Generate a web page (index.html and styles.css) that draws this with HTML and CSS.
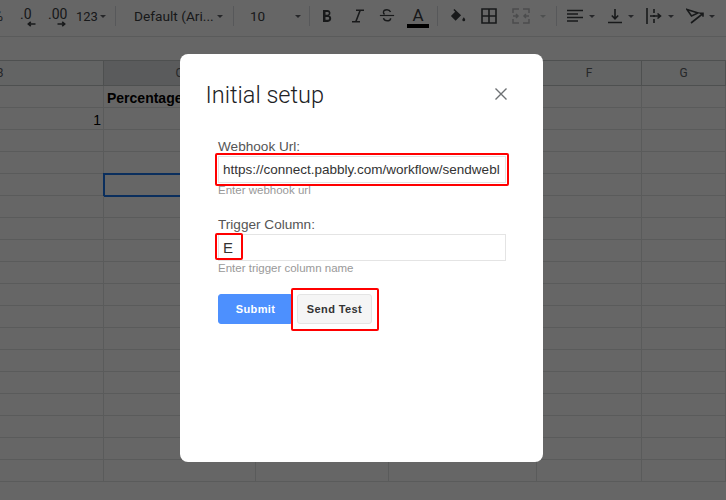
FILE: index.html
```html
<!DOCTYPE html>
<html lang="en">
<head>
<meta charset="utf-8">
<title>Initial setup</title>
<link rel="stylesheet" href="styles.css">
</head>
<body>
<div class="app">
  <div class="toolbar">
    <span class="tb-text pct">%</span>
    <span class="tb-dec dec0"><span>.0</span>
      <svg width="9" height="6" viewBox="0 0 9 6"><path d="M8.500 3H1.500M3.800 .8 1.300 3l2.500 2.200" class="st thick"/></svg></span>
    <span class="tb-dec dec00"><span>.00</span>
      <svg width="9" height="6" viewBox="0 0 9 6"><path d="M.5 3h7M5.200 .8 7.700 3 5.200 5.200" class="st thick"/></svg></span>
    <span class="tb-text num">123</span><i class="caret c-num"></i>
    <i class="sep s1"></i>
    <span class="tb-text font">Default (Ari...</span><i class="caret c-font"></i>
    <i class="sep s2"></i>
    <span class="tb-text size">10</span><i class="caret c-size"></i>
    <i class="sep s3"></i>
    <svg class="ic bold" width="12" height="14" viewBox="0 0 12 14"><path d="M2 1h4.500a3 3 0 0 1 1.500 5.600A3.300 3.300 0 0 1 7 13H2zM4.500 3v2.700h2a1.350 1.350 0 0 0 0-2.700zM4.500 8v2.800h2.300a1.400 1.400 0 0 0 0-2.800z" class="fl" fill-rule="evenodd"/></svg>
    <svg class="ic ital" width="14" height="14" viewBox="0 0 14 14"><path d="M5 1.200h8M1 12.800h8M9.200 1.200 4.800 12.800" class="st thick"/></svg>
    <svg class="ic strike" width="16" height="15" viewBox="0 0 18 16"><path d="M1 8h16" class="st"/><path d="M13 4c-.7-1.700-2-2.500-4-2.500-2.400 0-4 1.200-4 3 0 1 .5 1.700 1.300 2.300M5 11c.6 2 2 3 4.200 3 2.400 0 3.900-1.200 3.900-3" class="st thick"/></svg>
    <span class="color-a"><span class="a-letter">A</span><i class="a-bar"></i></span>
    <i class="sep s4"></i>
    <svg class="ic fill" width="16" height="15" viewBox="0 0 18 16"><path d="M5 .6 3.800 1.800l2 2L1 8.500l5.300 5.300 6.200-6.200z" class="fl"/><path d="M15.500 10c-1 1.300-1.600 2.200-1.600 3a1.600 1.600 0 0 0 3.200 0c0-.8-.6-1.700-1.600-3z" class="fl"/></svg>
    <svg class="ic borders" width="16" height="16" viewBox="0 0 16 16"><path d="M1 1h14v14H1zM8 1v14M1 8h14" class="st thick"/></svg>
    <svg class="ic merge" width="18" height="16" viewBox="0 0 18 16"><path d="M1 5V1h6M11 1h6v4M1 11v4h6M11 15h6v-4M1 8h5M17 8h-5M4 6l2 2-2 2M14 6l-2 2 2 2" class="st dim"/></svg>
    <i class="caret caret-dim c-merge"></i>
    <i class="sep s5"></i>
    <svg class="ic align" width="16" height="14" viewBox="0 0 16 14"><path d="M0 1.500h16M0 5h11M0 8.500h16M0 12h11" class="st thick"/></svg><i class="caret c-align"></i>
    <svg class="ic valign" width="14" height="16" viewBox="0 0 14 16"><path d="M0 14.500h14M7 1v9.500M3.800 7.500 7 10.800l3.200-3.300" class="st thick"/></svg><i class="caret c-valign"></i>
    <svg class="ic wrap" width="16" height="16" viewBox="0 0 16 16"><path d="M1 0v16M8 1v4M8 7v2M8 11v4M4 8h10M11.500 5.500 14.500 8l-3 2.500" class="st thick"/></svg><i class="caret c-wrap"></i>
    <svg class="ic rotate" width="18" height="16" viewBox="0 0 18 16"><path d="M1 1.500 12 5 5.500 8zM5 15l12-9.500M13.500 5.200H17v3.500" class="st thick"/></svg><i class="caret c-rotate"></i>
  </div>
  <div class="formula"></div>
  <div class="sheet">
    <div class="head">B</div><div class="head active">C</div><div class="head">D</div><div class="head">E</div><div class="head">F</div><div class="head">G</div>
    <div class="cell"></div><div class="cell bold-cell">Percentage</div><div class="cell"></div><div class="cell"></div><div class="cell"></div><div class="cell"></div>
    <div class="cell num-cell">1</div><div class="cell"></div><div class="cell"></div><div class="cell"></div><div class="cell"></div><div class="cell"></div>
    <div class="cell"></div><div class="cell"></div><div class="cell"></div><div class="cell"></div><div class="cell"></div><div class="cell"></div>
    <div class="cell"></div><div class="cell"></div><div class="cell"></div><div class="cell"></div><div class="cell"></div><div class="cell"></div>
    <div class="cell"></div><div class="cell selected"></div><div class="cell"></div><div class="cell"></div><div class="cell"></div><div class="cell"></div>
    <div class="cell"></div><div class="cell"></div><div class="cell"></div><div class="cell"></div><div class="cell"></div><div class="cell"></div>
    <div class="cell"></div><div class="cell"></div><div class="cell"></div><div class="cell"></div><div class="cell"></div><div class="cell"></div>
    <div class="cell"></div><div class="cell"></div><div class="cell"></div><div class="cell"></div><div class="cell"></div><div class="cell"></div>
    <div class="cell"></div><div class="cell"></div><div class="cell"></div><div class="cell"></div><div class="cell"></div><div class="cell"></div>
    <div class="cell"></div><div class="cell"></div><div class="cell"></div><div class="cell"></div><div class="cell"></div><div class="cell"></div>
    <div class="cell"></div><div class="cell"></div><div class="cell"></div><div class="cell"></div><div class="cell"></div><div class="cell"></div>
    <div class="cell"></div><div class="cell"></div><div class="cell"></div><div class="cell"></div><div class="cell"></div><div class="cell"></div>
    <div class="cell"></div><div class="cell"></div><div class="cell"></div><div class="cell"></div><div class="cell"></div><div class="cell"></div>
    <div class="cell"></div><div class="cell"></div><div class="cell"></div><div class="cell"></div><div class="cell"></div><div class="cell"></div>
    <div class="cell"></div><div class="cell"></div><div class="cell"></div><div class="cell"></div><div class="cell"></div><div class="cell"></div>
    <div class="cell"></div><div class="cell"></div><div class="cell"></div><div class="cell"></div><div class="cell"></div><div class="cell"></div>
    <div class="cell"></div><div class="cell"></div><div class="cell"></div><div class="cell"></div><div class="cell"></div><div class="cell"></div>
    <div class="cell"></div><div class="cell"></div><div class="cell"></div><div class="cell"></div><div class="cell"></div><div class="cell"></div>
  </div>
</div>

<div class="scrim"></div>

<section class="dialog">
  <header class="dialog-head">
    <h1 class="dialog-title">Initial setup</h1>
    <svg class="close" width="12" height="12" viewBox="0 0 12 12"><path d="M.5.5l11 11M11.500.5l-11 11"/></svg>
  </header>
  <form class="form">
    <div class="field">
      <label class="label">Webhook Url:</label>
      <div class="input">https://connect.pabbly.com/workflow/sendwebl</div>
      <span class="mark mark-url"></span>
      <small class="hint">Enter webhook url</small>
    </div>
    <div class="field">
      <label class="label">Trigger Column:</label>
      <div class="input input-large">E</div>
      <span class="mark mark-col"></span>
      <small class="hint">Enter trigger column name</small>
    </div>
    <div class="actions">
      <button type="button" class="btn btn-primary">Submit</button>
      <span class="test-wrap">
        <button type="button" class="btn btn-default">Send Test</button>
        <span class="mark mark-test"></span>
      </span>
    </div>
  </form>
</section>
</body>
</html>
```

FILE: styles.css
```css
* { box-sizing: border-box; }
html, body { margin: 0; padding: 0; height: 100%; overflow: hidden; }
body { width: 726px; height: 500px; position: relative; background: #fff; font-family: "Liberation Sans", Arial, sans-serif; }

.app { width: 726px; height: 500px; display: flex; flex-direction: column; overflow: hidden; }

/* toolbar */
.toolbar { flex: none; height: 37px; display: flex; align-items: center; border-bottom: 1px solid #e2e3e3; padding-bottom: 4px; color: #3c4043; white-space: nowrap; overflow: hidden; }
.toolbar > * { flex: none; }
.tb-text { font: 14px Roboto, sans-serif; color: #3c4043; }
.pct { width: 3px; overflow: hidden; direction: rtl; }
.tb-dec { display: flex; flex-direction: column; margin-top: 2px; font: 14px/14px Roboto, sans-serif; color: #3c4043; }
.tb-dec svg { align-self: flex-end; }
.dec0 { margin-left: 17px; width: 16px; }
.dec00 { margin-left: 12px; width: 18px; }
.num { margin-left: 10px; width: 21px; font-size: 13px; }
.font { margin-left: 18px; width: 73px; font-size: 13.7px; }
.size { margin-left: 16px; width: 16px; font-size: 13.5px; }
.caret { width: 0; height: 0; margin-top: 1px; border-left: 3.5px solid transparent; border-right: 3.5px solid transparent; border-top: 3.5px solid #5f6368; }
.caret-dim { border-top-color: #c4c7c8; }
.c-num { margin-left: 3px; }
.c-font { margin-left: 10px; }
.c-size { margin-left: 29px; }
.c-merge { margin-left: 10px; }
.c-align { margin-left: 6px; }
.c-valign { margin-left: 6px; }
.c-wrap { margin-left: 6px; }
.c-rotate { margin-left: 5px; }
.sep { width: 1px; height: 20px; background: #dadce0; }
.s1 { margin-left: 9px; }
.s2 { margin-left: 10px; }
.s3 { margin-left: 8px; }
.s4 { margin-left: 8px; }
.s5 { margin-left: 10px; }
.ic { display: block; margin-bottom: 1px; }
.st { fill: none; stroke: #3c4043; stroke-width: 1.3; }
.st.thick { stroke-width: 1.6; }
.st.dim { stroke: #bcbfc1; stroke-width: 1.5; }
.fl { fill: #3c4043; }
.bold { margin-left: 11px; }
.ital { margin-left: 18px; }
.strike { margin-left: 14px; }
.color-a { margin-left: 12px; margin-top: 2px; width: 22px; display: flex; flex-direction: column; align-items: center; }
.a-letter { font: 17px/18px Roboto, sans-serif; color: #3c4043; }
.a-bar { width: 22px; height: 4px; background: #000; display: block; }
.fill { margin-left: 12px; }
.borders { margin-left: 15px; }
.merge { margin-left: 15px; }
.align { margin-left: 10px; }
.valign { margin-left: 13px; }
.wrap { margin-left: 12px; }
.rotate { margin-left: 12px; }

/* formula bar */
.formula { flex: none; height: 24px; border-bottom: 1px solid #c4c7c8; }

/* sheet */
.sheet { flex: 1; display: grid; grid-template-columns: 104px 152px 133px 148px 105px 84px; grid-template-rows: 25px; grid-auto-rows: 22px; align-content: start; }
.head { border-right: 1px solid #c4c7c8; border-bottom: 1px solid #c4c7c8; display: flex; align-items: center; justify-content: center; font: 12px Roboto, sans-serif; color: #5f6368; background: #f8f9fa; }
.head:first-child { justify-content: flex-start; margin-left: -4px; }
.head.active { background: #e1e3e6; }
.cell { border-right: 1px solid #e2e3e3; border-bottom: 1px solid #e2e3e3; font: 14px/24px "Liberation Sans", Arial, sans-serif; color: #000; padding: 0 3px; white-space: nowrap; }
.bold-cell { font-weight: 700; }
.num-cell { text-align: right; padding-right: 2px; }
.selected { outline: 2px solid #1a73e8; outline-offset: -1px; }

/* overlay */
.scrim { position: absolute; inset: 0; background: rgba(0, 0, 0, .6); }

.dialog { position: absolute; left: 180px; top: 54px; width: 363px; height: 408px; background: #fff; border-radius: 8px; }
.dialog-head { display: flex; justify-content: space-between; align-items: flex-start; padding: 25px 36px 0 25.5px; height: 84px; }
.dialog-title { margin: 0; font: 300 23.5px/32px Roboto, sans-serif; color: #202124; }
.close { margin-top: 9px; fill: none; stroke: #6d7073; stroke-width: 1.4; }

.form { padding: 0 37px 0 38px; }
.field { position: relative; display: flex; flex-direction: column; margin-bottom: 18px; }
.label { font-size: 13.6px; line-height: 18px; color: #555; }
.input { height: 27px; border: 1px solid #e4e4e4; padding: 0 5px 0 4px; font-size: 13.5px; line-height: 25px; color: #333; overflow: hidden; white-space: nowrap; }
.input-large { font-size: 15px; }
.hint { font-size: 11.5px; line-height: 15px; color: #999; }
.actions { display: flex; gap: 4px; }
.btn { height: 30px; width: 75px; border-radius: 3px; font: bold 11px "Liberation Sans", Arial, sans-serif; letter-spacing: .4px; padding: 0; }
.btn-primary { background: #4d90fe; border: 1px solid #4d90fe; color: #fff; }
.btn-default { background: #f5f5f5; border: 1px solid #e4e4e4; color: #333; }
.test-wrap { position: relative; display: block; }

.mark { position: absolute; border: 2px solid #f00; border-radius: 2px; pointer-events: none; }
.mark-url { left: -3px; right: -3px; top: 15px; height: 33px; }
.mark-col { left: -3px; width: 28px; top: 17px; height: 27px; }
.mark-test { left: -6px; top: -6px; width: 88px; height: 43px; }
```
